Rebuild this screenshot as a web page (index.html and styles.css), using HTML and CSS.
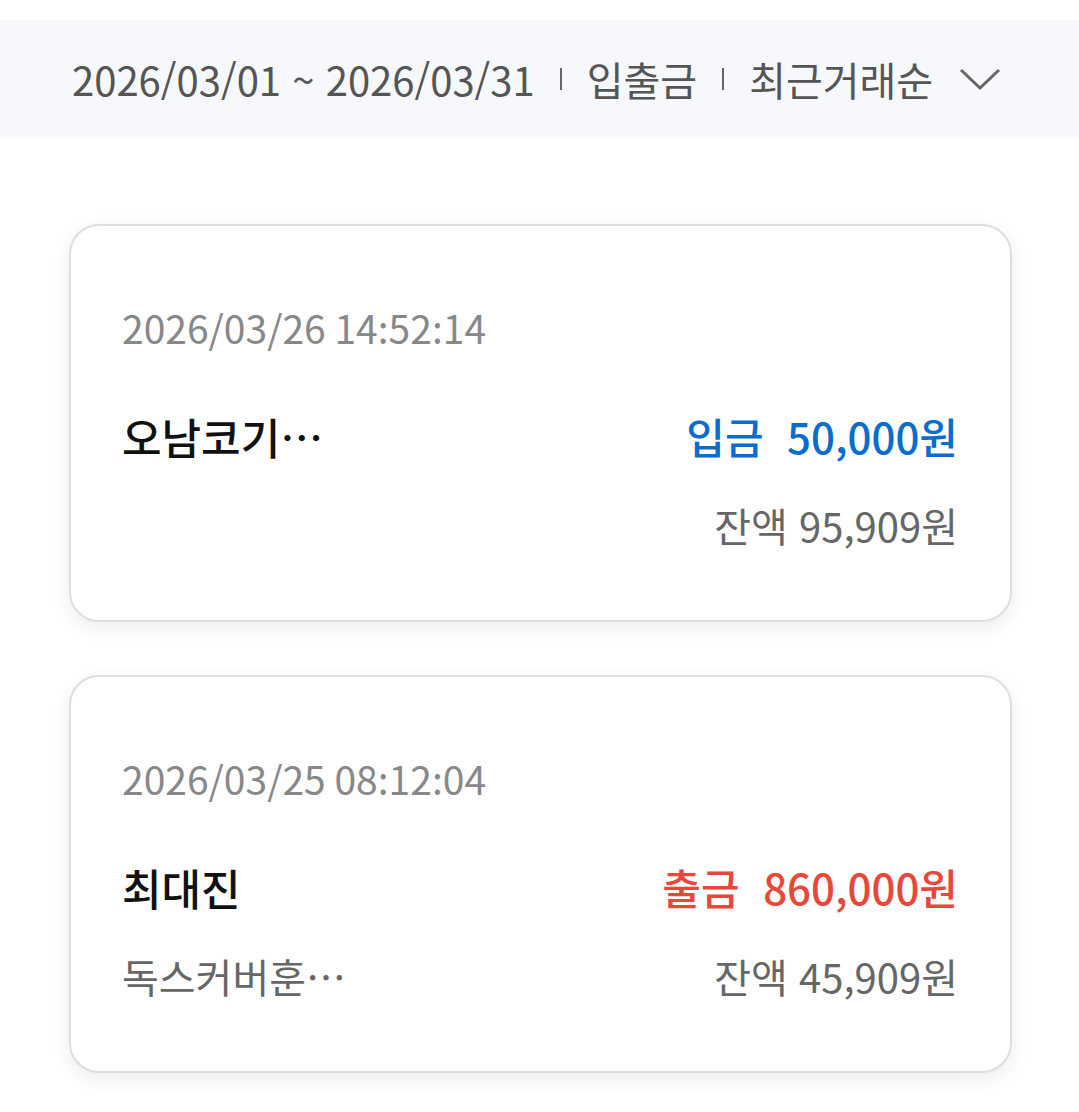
FILE: index.html
```html
<!DOCTYPE html>
<html lang="ko">
<head>
<meta charset="UTF-8">
<meta name="viewport" content="width=device-width, initial-scale=1.0">
<title>거래내역</title>
<link rel="stylesheet" href="styles.css">
</head>
<body>
<div class="filter-bar">
  <span class="filter-item">2026/03/01 ~ 2026/03/31</span>
  <span class="divider"></span>
  <span class="filter-item">입출금</span>
  <span class="divider"></span>
  <span class="filter-item">최근거래순</span>
  <svg class="chevron" width="42" height="24" viewBox="0 0 42 24"><path d="M2 3 L21 21 L40 3" fill="none" stroke="#666" stroke-width="3"/></svg>
</div>

<div class="list">
  <div class="card">
    <div class="row date" lang="en">2026/03/26 14:52:14</div>
    <div class="row main">
      <span class="name">오남코기…</span>
      <span class="amount deposit">입금&nbsp;&nbsp;50,000원</span>
    </div>
    <div class="row sub">
      <span class="memo"></span>
      <span class="balance">잔액 95,909원</span>
    </div>
  </div>

  <div class="card">
    <div class="row date" lang="en">2026/03/25 08:12:04</div>
    <div class="row main">
      <span class="name">최대진</span>
      <span class="amount withdraw">출금&nbsp;&nbsp;860,000원</span>
    </div>
    <div class="row sub">
      <span class="memo">독스커버훈…</span>
      <span class="balance">잔액 45,909원</span>
    </div>
  </div>
</div>
</body>
</html>
```

FILE: styles.css
```css
body {
  margin: 0;
  padding: 0;
  background-color: #fff;
  font-family: "Noto Sans CJK KR", "Noto Sans", sans-serif;
}

.filter-bar {
  margin-top: 20px;
  height: 117px;
  background-color: #f7f8fb;
  display: flex;
  align-items: center;
  padding-left: 72px;
  color: #555;
  font-size: 40px;
}

.filter-item {
  line-height: 1;
}

.divider {
  width: 2px;
  height: 22px;
  background-color: #666;
  margin: 0 25px;
}

.chevron {
  margin-left: 26px;
}

.list {
  padding: 87px 67px 40px 69px;
  display: flex;
  flex-direction: column;
  gap: 53px;
}

.card {
  border: 2px solid #dedede;
  border-radius: 30px;
  background-color: #fff;
  box-shadow: 0 6px 20px rgba(0, 0, 0, 0.08);
  padding: 71px 52px 65px 51px;
}

.row {
  height: 60px;
  line-height: 60px;
  display: flex;
  justify-content: space-between;
}

.date {
  font-family: "Noto Sans CJK JP", "Noto Sans CJK KR", sans-serif;
  font-feature-settings: "locl" 0, "calt" 0;
  font-size: 39px;
  color: #888;
}

.main {
  margin-top: 49px;
}

.sub {
  margin-top: 29px;
}

.name {
  font-size: 43px;
  font-weight: 500;
  color: #111;
}

.amount {
  font-size: 42px;
  font-weight: 500;
}

.deposit {
  color: #0a6ccf;
}

.withdraw {
  color: #e8473a;
}

.memo,
.balance {
  font-size: 40px;
  color: #666;
}
```
